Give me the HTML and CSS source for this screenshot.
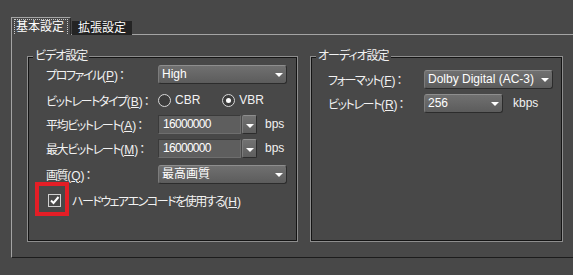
FILE: index.html
```html
<!DOCTYPE html>
<html lang="ja">
<head>
    <meta charset="UTF-8">
    <title>エンコード設定</title>
    <link rel="stylesheet" href="styles.css">
</head>
<body>
    <div class="tabs">
        <div class="tab active"><span class="focus">基本設定</span></div>
        <div class="tab">拡張設定</div>
    </div>
    <div class="panel">
        <fieldset class="group video">
            <legend>ビデオ設定</legend>
            <div class="rows">
                <div class="row">
                    <span class="label">プロファイル<span class="key">(<u>P</u>)</span>：</span>
                    <div class="select wide">High</div>
                </div>
                <div class="row spaced">
                    <span class="label">ビットレートタイプ<span class="key">(<u>B</u>)</span>：</span>
                    <span class="radio"></span><span class="opt">CBR</span>
                    <span class="radio on"></span><span class="opt">VBR</span>
                </div>
                <div class="row">
                    <span class="label">平均ビットレート<span class="key">(<u>A</u>)</span>：</span>
                    <div class="combo"><span class="value">16000000</span><span class="drop"></span></div>
                    <span class="unit">bps</span>
                </div>
                <div class="row">
                    <span class="label">最大ビットレート<span class="key">(<u>M</u>)</span>：</span>
                    <div class="combo"><span class="value">16000000</span><span class="drop"></span></div>
                    <span class="unit">bps</span>
                </div>
                <div class="row spaced">
                    <span class="label">画質<span class="key">(<u>Q</u>)</span>：</span>
                    <div class="select wide">最高画質</div>
                </div>
                <div class="row spaced check-row">
                    <span class="checkbox">
                        <svg width="11" height="11" viewBox="0 0 11 11"><path d="M2 5.5 L4.5 8 L9.5 2" fill="none" stroke="#fff" stroke-width="2"/></svg>
                    </span>
                    <span class="check-text">ハードウェアエンコードを使用する<span class="key">(<u>H</u>)</span></span>
                    <span class="highlight"></span>
                </div>
            </div>
        </fieldset>
        <fieldset class="group audio">
            <legend>オーディオ設定</legend>
            <div class="rows">
                <div class="row">
                    <span class="label">フォーマット<span class="key">(<u>F</u>)</span>：</span>
                    <div class="select wide">Dolby Digital (AC-3)</div>
                </div>
                <div class="row">
                    <span class="label">ビットレート<span class="key">(<u>R</u>)</span>：</span>
                    <div class="select narrow">256</div>
                    <span class="unit kbps">kbps</span>
                </div>
            </div>
        </fieldset>
    </div>
</body>
</html>
```

FILE: styles.css
```css
body {
    margin: 0;
    height: 275px;
    overflow: hidden;
    background-color: #484848;
    color: #f2f2f2;
    font-family: "Liberation Sans", "Noto Sans CJK JP", sans-serif;
    font-size: 12px;
    font-feature-settings: "palt";
}
u {
    text-underline-offset: 1px;
}
.key {
    letter-spacing: 0;
    margin-right: 1px;
}

/* タブ */
.tabs {
    display: flex;
    align-items: flex-end;
    gap: 1px;
    height: 17px;
    margin: 17px 0 0 11px;
}
.tab {
    position: relative;
    z-index: 1;
    height: 14px;
    margin-bottom: -1px;
    padding: 0 6px;
    line-height: 14px;
    background-color: #242424;
    color: #fff;
}
.tab.active {
    height: 17px;
    width: 58px;
    padding: 0;
    background-color: #484848;
    border-top: 1px solid #a4a4a4;
    border-left: 1px solid #a4a4a4;
    border-right: 1px solid #2a2a2a;
}
.tab .focus {
    display: block;
    height: 14px;
    margin: 1px 2px 0 2px;
    padding-left: 1px;
    line-height: 14px;
    border: 1px dotted #c8c8c8;
    border-bottom: none;
}

/* パネル */
.panel {
    display: flex;
    gap: 12px;
    box-sizing: border-box;
    height: 224px;
    margin-left: 11px;
    padding: 14px 0 0 15px;
    border-top: 1px solid #a4a4a4;
    border-left: 1px solid #a4a4a4;
    border-bottom: 1px solid #1c1c1c;
}
.group {
    box-sizing: border-box;
    height: 193px;
    margin: 0;
    padding: 0;
    border: 1px solid #8e8e8e;
    box-shadow: inset 0 0 0 1px #141414;
}
.group legend {
    margin-left: 5px;
    padding: 0 2px;
    line-height: 15px;
    letter-spacing: -1px;
    background-color: #484848;
}
.video {
    width: 271px;
}
.audio {
    width: 253px;
}
.rows {
    display: flex;
    flex-direction: column;
    gap: 2px;
    margin-top: -1px;
    padding-left: 18px;
}
.audio .rows {
    margin-top: 0;
    padding: 4px 0 0 17px;
}
.row {
    position: relative;
    display: flex;
    align-items: center;
    height: 22px;
}
.row.spaced {
    margin-top: 2px;
}
.label {
    flex-shrink: 0;
    width: 112px;
    white-space: nowrap;
    letter-spacing: -1.4px;
}
.audio .label {
    width: 96px;
}

/* ドロップダウン */
.select {
    position: relative;
    box-sizing: border-box;
    height: 19px;
    padding-left: 3px;
    line-height: 17px;
    border: 1px solid;
    border-color: #8e8e8e #2c2c2c #2c2c2c #7c7c7c;
    border-radius: 3px;
    background: linear-gradient(#707070, #5c5c5c);
    color: #fff;
}
.select.wide {
    width: 129px;
}
.select.narrow {
    width: 79px;
}
.select::after {
    content: "";
    position: absolute;
    right: 3px;
    top: 7px;
    border-left: 4px solid transparent;
    border-right: 4px solid transparent;
    border-top: 4px solid #fff;
}

/* コンボボックス */
.combo {
    display: flex;
    gap: 1px;
    height: 19px;
}
.combo .value {
    box-sizing: border-box;
    width: 83px;
    padding-left: 4px;
    line-height: 17px;
    letter-spacing: -0.7px;
    border: 1px solid;
    border-color: #3a3a3a #6e6e6e #6e6e6e #3a3a3a;
    background-color: #5e5e5e;
    color: #fff;
}
.combo .drop {
    position: relative;
    box-sizing: border-box;
    width: 15px;
    border: 1px solid;
    border-color: #8e8e8e #2c2c2c #2c2c2c #7c7c7c;
    border-radius: 2px;
    background: linear-gradient(#727272, #5e5e5e);
}
.combo .drop::after {
    content: "";
    position: absolute;
    left: 3px;
    top: 8px;
    border-left: 4px solid transparent;
    border-right: 4px solid transparent;
    border-top: 4px solid #fff;
}
.unit {
    margin-left: 8px;
}
.unit.kbps {
    margin-left: 10px;
}

/* ラジオボタン */
.radio {
    display: flex;
    align-items: center;
    justify-content: center;
    box-sizing: border-box;
    width: 13px;
    height: 13px;
    border: 1px solid #d8d8d8;
    border-radius: 50%;
    background-color: #3c3c3c;
}
.radio.on::after {
    content: "";
    width: 5px;
    height: 5px;
    border-radius: 50%;
    background-color: #fff;
}
.opt {
    margin: 0 22px 0 4px;
}

/* チェックボックス */
.checkbox {
    display: flex;
    align-items: center;
    justify-content: center;
    box-sizing: border-box;
    width: 13px;
    height: 13px;
    margin-left: 2px;
    border: 1px solid #d0d0d0;
    background-color: #4a4a4a;
}
.check-text {
    margin-left: 11px;
    letter-spacing: -1.5px;
}
.highlight {
    position: absolute;
    left: -11px;
    top: -7px;
    box-sizing: border-box;
    width: 34px;
    height: 34px;
    border: 4px solid #e41e26;
}
```
